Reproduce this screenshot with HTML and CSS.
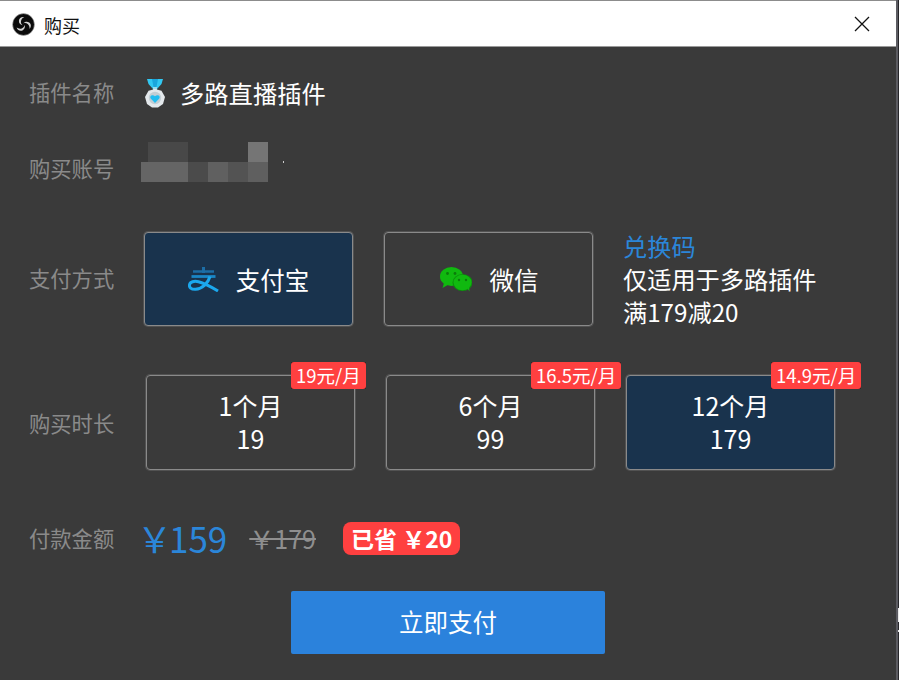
FILE: index.html
```html
<!DOCTYPE html>
<html lang="zh">
<head>
<meta charset="utf-8">
<title>购买</title>
<link rel="stylesheet" href="styles.css">
</head>
<body>
<div class="window">
  <header class="titlebar">
    <svg class="obs" viewBox="0 0 24 24" width="23" height="23" aria-hidden="true">
      <circle cx="12" cy="12" r="11.400" fill="#0b0b0b" stroke="#bbb" stroke-width=".6"/>
      <g fill="#d4d4d4">
        <path d="M12.800 4.200C9.800 3.600 7.400 5.400 7.200 8c-.2 2.600 1.600 4.400 4 4.800-1.400-1-2.200-2.600-1.800-4.400.4-1.900 1.700-3.400 3.400-4.200z"/>
        <path d="M12.800 4.200C9.800 3.600 7.400 5.400 7.200 8c-.2 2.600 1.600 4.400 4 4.800-1.400-1-2.200-2.600-1.800-4.400.4-1.900 1.700-3.400 3.400-4.200z" transform="rotate(120 12 12)"/>
        <path d="M12.800 4.200C9.800 3.600 7.400 5.400 7.200 8c-.2 2.600 1.600 4.400 4 4.800-1.400-1-2.200-2.600-1.800-4.400.4-1.900 1.700-3.400 3.400-4.200z" transform="rotate(240 12 12)"/>
      </g>
    </svg>
    <span class="title">购买</span>
    <svg class="close" viewBox="0 0 16 16" width="16" height="16" aria-hidden="true">
      <path d="M1 1l14 14M15 1L1 15" stroke="#111" stroke-width="1.300" fill="none"/>
    </svg>
  </header>
  <main class="content">
    <div class="row row-name">
      <span class="label">插件名称</span>
      <svg class="medal" viewBox="0 0 22 30" width="22" height="30" aria-hidden="true">
        <path d="M3 1h16l-1.500 5L13 11H9L4.500 6z" fill="#32c8f2"/>
        <path d="M8 1h6l-1.500 8h-3z" fill="#1aa6dc"/>
        <path d="M9 9h4v3H9z" fill="#9adcee"/>
        <path d="M11 11l6.500 1.800L21 19l-2 7-5 3.500H8L3 26 1 19l3.500-6.200z" fill="#e4e9ec"/>
        <circle cx="11" cy="20" r="6.200" fill="#c3ced4"/>
        <path d="M11 25l-4.300-4.600c-1.600-2.200 1.800-4.600 4.300-2.100 2.500-2.500 5.900-.1 4.300 2.100z" fill="#23bdf0"/>
      </svg>
      <span class="plugin">多路直播插件</span>
    </div>
    <div class="row row-account">
      <span class="label">购买账号</span>
      <div class="mosaic" aria-hidden="true">
        <i class="m m1"></i><i class="m m2"></i>
        <i class="m m3"></i><i class="m m4"></i><i class="m m5"></i><i class="m m6"></i><i class="m m7"></i>
        <i class="speck"></i>
      </div>
    </div>
    <div class="row row-pay">
      <span class="label">支付方式</span>
      <div class="opt opt-pay selected">
        <svg class="ali" viewBox="0 0 31 25" width="31" height="25" aria-hidden="true">
          <path d="M15.500 0v6" stroke="#1c6ea6" stroke-width="3" fill="none"/>
          <path d="M5 4.500h21" stroke="#1c6ea6" stroke-width="2.500" fill="none"/>
          <path d="M3.500 9.500h24" stroke="#1a86c6" stroke-width="2.800" fill="none"/>
          <path d="M22 9.500c-2 7-8 12.500-14.500 12.800-4.500.2-6.500-2-6-4.500.6-3 4.500-4.200 9-3.100 6.500 1.500 13 5.300 19.500 9.300" stroke="#1ba8ee" stroke-width="3" fill="none"/>
        </svg>
        <span>支付宝</span>
      </div>
      <div class="opt opt-pay">
        <svg class="wechat" viewBox="0 0 33 26" width="33" height="26" aria-hidden="true">
          <ellipse cx="12.500" cy="10.500" rx="11.500" ry="9.500" fill="#10b90f"/>
          <path d="M5 17l-1.500 5 6-3.500z" fill="#10b90f"/>
          <ellipse cx="23.500" cy="16.500" rx="10" ry="8.600" fill="#0c8f0d"/>
          <ellipse cx="23.500" cy="16.500" rx="9" ry="7.800" fill="#10b90f"/>
          <path d="M28 22l2.500 3.500-.5-5z" fill="#10b90f"/>
          <circle cx="8.500" cy="7.500" r="1.400" fill="#0b7c0b"/><circle cx="16" cy="7.500" r="1.400" fill="#0b7c0b"/>
          <circle cx="20" cy="14" r="1.200" fill="#0b7c0b"/><circle cx="27" cy="14" r="1.200" fill="#0b7c0b"/>
        </svg>
        <span>微信</span>
      </div>
      <div class="coupon">
        <div class="coupon-link">兑换码</div>
        <div>仅适用于多路插件</div>
        <div>满179减20</div>
      </div>
    </div>
    <div class="row row-time">
      <span class="label">购买时长</span>
      <div class="opt opt-time"><span class="badge"><b>19元/月</b></span><span>1个月</span><span>19</span></div>
      <div class="opt opt-time"><span class="badge"><b>16.5元/月</b></span><span>6个月</span><span>99</span></div>
      <div class="opt opt-time selected"><span class="badge"><b>14.9元/月</b></span><span>12个月</span><span>179</span></div>
    </div>
    <div class="row row-price">
      <span class="label">付款金额</span>
      <span class="price"><span class="yen">￥</span>159</span>
      <span class="old">￥179</span>
      <span class="saved">已省 ￥20</span>
    </div>
    <button class="pay" type="button">立即支付</button>
  </main>
  <i class="edge edge-a"></i><i class="edge edge-b"></i>
</div>
</body>
</html>
```

FILE: styles.css
```css
* { box-sizing: border-box; }
html, body { margin: 0; height: 100%; background: #26262a; overflow: hidden; }
body { font-family: "Noto Sans CJK SC", "Liberation Sans", sans-serif; color: #fff; }
.window { width: 898px; height: 680px; display: flex; flex-direction: column; border-right: 2px solid #5c5c62; background: #3a3a3a; }
.titlebar { height: 47px; flex: none; background: #fff; color: #111; display: flex; align-items: center; padding: 2px 26px 0 12px; border-top: 1px solid #8c8c8c; border-bottom: 1px solid #999; }
.title { font-size: 18px; margin-left: 9px; flex: 1; }
.close { flex: none; margin-top: -2px; }
.content { flex: 1; position: relative; display: flex; flex-direction: column; padding-left: 29px; }
.row { display: flex; align-items: center; }
.label { width: 114px; flex: none; font-size: 21.300px; color: #8a8a8a; line-height: 30px; margin-top: -2px; }
.row-name { height: 30px; margin-top: 31px; }
.medal { margin-left: 1px; flex: none; }
.plugin { font-size: 24.300px; margin-left: 14px; line-height: 30px; }
.row-account { height: 30px; margin-top: 46px; position: relative; }
.mosaic { position: absolute; left: 112px; top: -12px; width: 145px; height: 40px; }
.m { position: absolute; display: block; }
.m1 { left: 7px; top: 0; width: 40px; height: 20px; background: #484848; }
.m2 { left: 107px; top: 0; width: 20px; height: 20px; background: #757575; }
.m3 { left: 0; top: 20px; width: 47px; height: 20px; background: #656565; }
.m4 { left: 47px; top: 20px; width: 20px; height: 20px; background: #4b4b4b; }
.m5 { left: 67px; top: 20px; width: 20px; height: 20px; background: #606060; }
.m6 { left: 87px; top: 20px; width: 20px; height: 20px; background: #535353; }
.m7 { left: 107px; top: 20px; width: 20px; height: 20px; background: #5f5f5f; }
.speck { position: absolute; left: 142px; top: 19px; width: 1px; height: 2px; background: #ccc; }
.opt { flex: none; border: 1px solid #8a8a8a; box-shadow: 0 0 0 1px rgba(138, 138, 138, .3); border-radius: 4px; display: flex; align-items: center; justify-content: center; width: 209px; position: relative; }
.opt.selected { background: #19334d; }
.row-pay { margin-top: 47px; height: 96px; }
.opt-pay { height: 94px; font-size: 24.500px; gap: 17px; }
.row-pay .opt:nth-of-type(1) { margin-left: 1px; }
.row-pay .opt + .opt { margin-left: 31px; }
.opt-pay .wechat { margin-right: 1px; }
.coupon { margin-left: 30px; font-size: 24.200px; line-height: 33px; margin-top: -1px; }
.coupon-link { color: #2b86d9; }
.row-time { margin-top: 47px; height: 96px; }
.row-time .label { margin-top: 2px; }
.row-time .opt { height: 95px; flex-direction: column; font-size: 25px; line-height: 33px; }
.row-time .opt:nth-of-type(1) { margin-left: 3px; }
.row-time .opt + .opt { margin-left: 31px; }
.badge { position: absolute; top: -14px; left: 144px; background: #1c1c1c; border-radius: 1px; white-space: nowrap; line-height: 27px; }
.badge b { display: block; font-weight: 400; background: #ff4040; color: #fff; font-size: 18.500px; line-height: 27px; height: 27px; padding: 0 5px; border-radius: 3px; }
.row-price { margin-top: 46px; height: 44px; }
.row-price .label { margin-top: 0; }
.price { font-size: 35px; color: #2b86d9; margin-left: -6px; line-height: 44px; }
.yen { margin-right: -3px; }
.old { font-size: 25px; color: #8f8f8f; margin-left: 22px; text-decoration: line-through; }
.saved { margin-left: 27px; background: #ff4040; border-radius: 8px; font-size: 23px; font-weight: 700; line-height: 33px; height: 33px; padding: 0 8px; white-space: nowrap; }
.pay { position: absolute; left: 291px; top: 544px; width: 314px; height: 63px; padding: 0 0 2px; border: 0; border-radius: 2px; background: #2b82dc; color: #fff; font: inherit; font-size: 24.500px; }
.edge { position: absolute; left: 898px; width: 1px; background: #e8e8e8; }
.edge-a { top: 608px; height: 14px; }
.edge-b { top: 630px; height: 2px; }
```
